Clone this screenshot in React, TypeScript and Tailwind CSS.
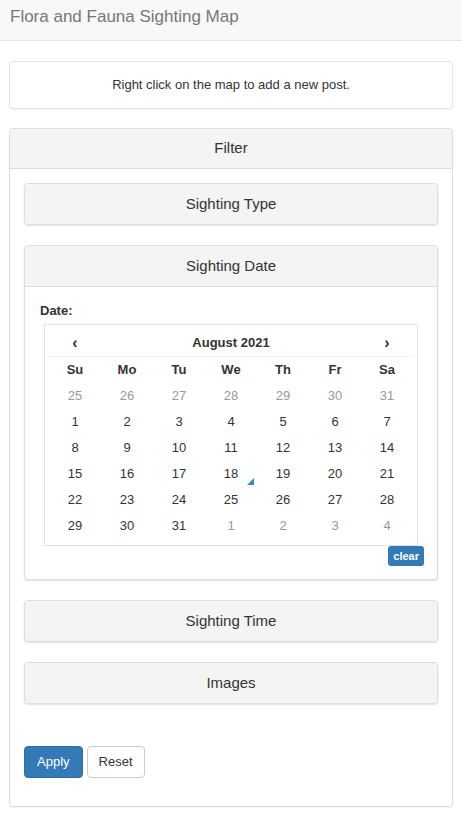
import React from 'react';

const dayNames = ['Su', 'Mo', 'Tu', 'We', 'Th', 'Fr', 'Sa'];

type Day = { n: number; muted?: boolean; today?: boolean };

const weeks: Day[][] = [
  [25, 26, 27, 28, 29, 30, 31].map((n) => ({ n, muted: true })),
  [1, 2, 3, 4, 5, 6, 7].map((n) => ({ n })),
  [8, 9, 10, 11, 12, 13, 14].map((n) => ({ n })),
  [15, 16, 17, 18, 19, 20, 21].map((n) => ({ n, today: n === 18 })),
  [22, 23, 24, 25, 26, 27, 28].map((n) => ({ n })),
  [
    { n: 29 },
    { n: 30 },
    { n: 31 },
    { n: 1, muted: true },
    { n: 2, muted: true },
    { n: 3, muted: true },
    { n: 4, muted: true },
  ],
];

// collapsed accordion panel
const SubPanel = ({ title }: { title: string }) => (
  <div className="mb-[20px] rounded-[4px] border border-[#ddd] bg-white shadow-[0_1px_2px_rgba(0,0,0,0.12)]">
    <div className="flex h-[40px] items-center justify-center rounded-[3px] bg-[#f4f4f4] text-[15px] leading-[20px] text-[#333]">
      {title}
    </div>
  </div>
);

const Calendar = () => (
  <div className="flex flex-col">
    <div className="mx-[4px] border border-[#e3e3e3] bg-white px-[4px] pb-[6px] pt-[4px]">
      <div className="grid h-[28px] grid-cols-7 items-center border-b border-[#f0f0f0] text-[13px] font-bold text-[#333]">
        <div className="text-center text-[16px] leading-none">‹</div>
        <div className="col-span-5 text-center">August 2021</div>
        <div className="text-center text-[16px] leading-none">›</div>
      </div>
      <div className="grid grid-cols-7 text-[13px]">
        {dayNames.map((d) => (
          <div key={d} className="flex h-[26px] items-center justify-center font-bold text-[#333]">
            {d}
          </div>
        ))}
        {weeks.flat().map((d, i) => (
          <div
            key={i}
            className={`relative flex h-[26px] items-center justify-center ${d.muted ? 'text-[#999]' : 'text-[#333]'}`}
          >
            {d.n}
            {d.today && (
              <span className="absolute bottom-[2px] right-[3px] h-0 w-0 border-b-[7px] border-l-[7px] border-b-[#3a87c8] border-l-transparent" />
            )}
          </div>
        ))}
      </div>
    </div>
    <button className="mr-[-2px] flex h-[20px] items-center self-end rounded-[3px] bg-[#337ab7] px-[5px] text-[11px] font-bold text-white">
      clear
    </button>
  </div>
);

export default function App() {
  return (
    <div className="min-h-screen bg-white font-['Liberation_Sans',Arial,sans-serif] text-[13px] text-[#333]">
      <div className="h-[41px] border-b border-[#e7e7e7] bg-[#f8f8f8] px-[10px] pt-[7px]">
        <span className="text-[17px] leading-[19px] text-[#777]">Flora and Fauna Sighting Map</span>
      </div>

      <div className="px-[9px] pt-[20px]">
        <div className="mb-[19px] rounded-[4px] border border-[#e3e3e3] bg-white py-[14px] text-center leading-[18px] shadow-[0_1px_1px_rgba(0,0,0,0.05)]">
          Right click on the map to add a new post.
        </div>

        <div className="rounded-[4px] border border-[#ddd] bg-white shadow-[0_1px_1px_rgba(0,0,0,0.05)]">
          <div className="flex h-[40px] items-center justify-center rounded-t-[3px] border-b border-[#ddd] bg-[#f4f4f4] text-[15px]">
            Filter
          </div>
          <div className="px-[14px] pb-[14px] pt-[14px]">
            <SubPanel title="Sighting Type" />

            <div className="mb-[20px] rounded-[4px] border border-[#ddd] bg-white shadow-[0_1px_2px_rgba(0,0,0,0.12)]">
              <div className="flex h-[41px] items-center justify-center rounded-t-[3px] border-b border-[#ddd] bg-[#f4f4f4] text-[15px] leading-[20px]">
                Sighting Date
              </div>
              <div className="px-[15px] pb-[13px] pt-[15px]">
                <div className="mb-[5px] font-bold leading-[17px]">Date:</div>
                <Calendar />
              </div>
            </div>

            <SubPanel title="Sighting Time" />
            <SubPanel title="Images" />

            <div className="mb-[14px] mt-[42px] flex gap-[4px]">
              <button className="h-[32px] rounded-[4px] border border-[#2e6da4] bg-[#337ab7] px-[12px] text-[13px] text-white">
                Apply
              </button>
              <button className="h-[32px] rounded-[4px] border border-[#ccc] bg-white px-[11px] text-[13px] text-[#333]">
                Reset
              </button>
            </div>
          </div>
        </div>
      </div>
    </div>
  );
}
